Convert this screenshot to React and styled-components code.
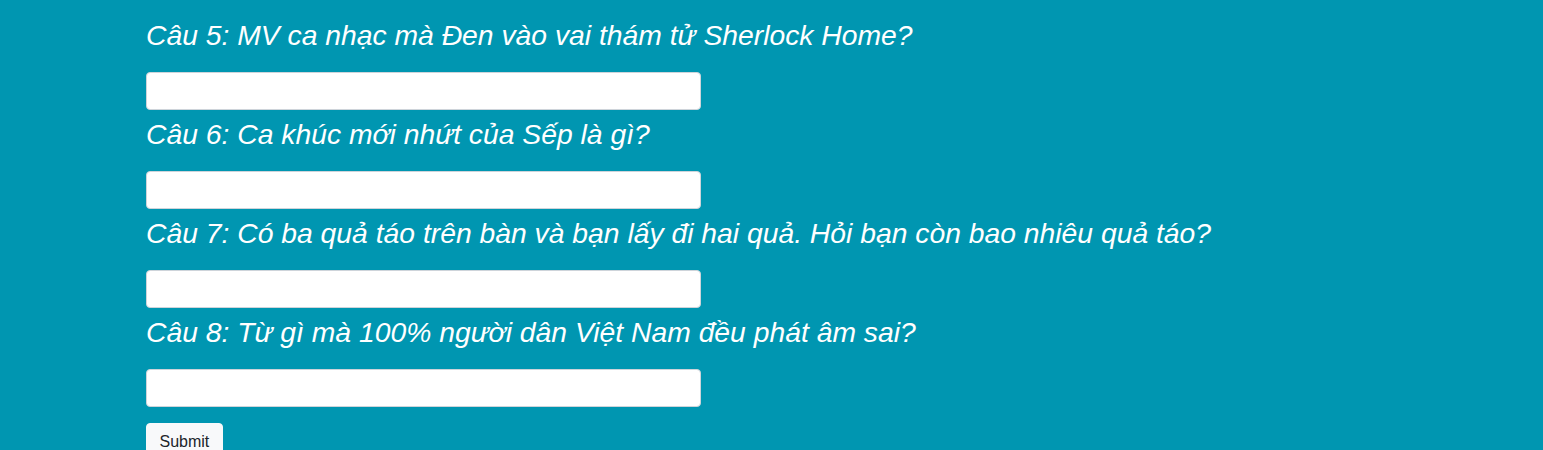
import React from 'react'
import styled, { createGlobalStyle } from 'styled-components'

const GlobalStyle = createGlobalStyle`
  html, body {
    margin: 0;
    padding: 0;
    background: #0096b1;
  }
  body {
    font-family: "Liberation Sans", Arial, sans-serif;
  }
`

const Page = styled.div`
  min-height: 100vh;
  background: #0096b1;
  padding: 0 0 0 146px;
  box-sizing: border-box;
`

const Form = styled.form`
  display: flex;
  flex-direction: column;
  align-items: flex-start;
`

const Question = styled.label`
  display: block;
  color: #ffffff;
  font-style: italic;
  font-size: 28.3px;
  line-height: 42px;
  white-space: nowrap;
  margin: ${p => (p.first ? '14px' : '3px')} 0 16px;
`

const Answer = styled.input`
  display: block;
  width: 555px;
  height: 38px;
  box-sizing: border-box;
  border: 1px solid #ced4da;
  border-radius: 4px;
  background: #ffffff;
  padding: 6px 12px;
  font-size: 16px;
  outline: none;
`

const SubmitButton = styled.button`
  margin-top: 16px;
  background: #f8f9fa;
  border: 1px solid #f8f9fa;
  border-radius: 4px;
  color: #212529;
  font-family: "Liberation Sans", Arial, sans-serif;
  font-size: 16px;
  line-height: 24px;
  padding: 6px 12.5px;
  cursor: pointer;
`

const questions = [
  'Câu 5: MV ca nhạc mà Đen vào vai thám tử Sherlock Home?',
  'Câu 6: Ca khúc mới nhứt của Sếp là gì?',
  'Câu 7: Có ba quả táo trên bàn và bạn lấy đi hai quả. Hỏi bạn còn bao nhiêu quả táo?',
  'Câu 8: Từ gì mà 100% người dân Việt Nam đều phát âm sai?',
]

export default function App() {
  return (
    <Page>
      <GlobalStyle />
      <Form onSubmit={e => e.preventDefault()}>
        {questions.map((q, i) => (
          <React.Fragment key={i}>
            <Question first={i === 0}>{q}</Question>
            <Answer type="text" />
          </React.Fragment>
        ))}
        <SubmitButton type="submit">Submit</SubmitButton>
      </Form>
    </Page>
  )
}
